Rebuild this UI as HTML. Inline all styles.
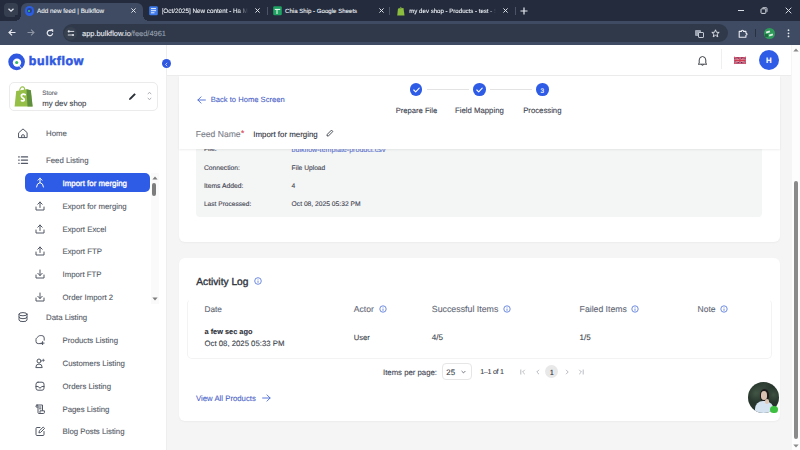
<!DOCTYPE html>
<html><head><meta charset="utf-8">
<style>
*{margin:0;padding:0;box-sizing:border-box;}
html,body{width:800px;height:450px;overflow:hidden;font-family:"Liberation Sans",sans-serif;background:#f5f5f5;position:relative;}
.a{position:absolute;white-space:nowrap;line-height:1;text-rendering:geometricPrecision;-webkit-text-stroke:0.1px currentColor;}
svg{display:block;overflow:visible;}
.tabt{color:#eceff4;top:8.6px;-webkit-text-stroke:0.1px #eceff4;}
.nav{font-size:7.8px;color:#545a66;}
.ico{stroke:#515764;fill:none;stroke-width:1;stroke-linecap:round;stroke-linejoin:round;}
.card{background:#fff;border-radius:6px;}
.lbl{font-size:6.6px;color:#3e4350;}
.th{font-size:8.6px;color:#6b7080;}
.td{font-size:7.6px;color:#3a3f4b;}
.info{stroke:#4b6fd8;fill:none;stroke-width:0.8;}
</style></head><body>
<!-- ===== browser chrome ===== -->
<div class="a" style="left:0;top:0;width:800px;height:21px;background:#232b3c;"></div>
<div class="a" style="left:0;top:21px;width:800px;height:24px;background:#3e4b62;"></div>
<div class="a" style="left:0;top:44px;width:800px;height:1px;background:#3e4b62;"></div>
<!-- dropdown btn -->
<div class="a" style="left:4px;top:3px;width:14px;height:14px;background:#363f50;border-radius:4px;"></div>
<svg class="a" style="left:7px;top:7px" width="8" height="6" viewBox="0 0 8 6"><path d="M1.5 1.8 L4 4.2 L6.5 1.8" stroke="#dfe3ea" stroke-width="1.3" fill="none"/></svg>
<!-- active tab -->
<div class="a" style="left:21px;top:3px;width:122px;height:19px;background:#3e4b62;border-radius:6px 6px 0 0;"></div>
<div class="a" style="left:15px;top:15px;width:6px;height:6px;background:radial-gradient(circle at 0 0,#232b3c 6px,#3e4b62 6px);"></div>
<div class="a" style="left:143px;top:15px;width:6px;height:6px;background:radial-gradient(circle at 6px 0,#232b3c 6px,#3e4b62 6px);"></div>
<!-- favicon bulkflow -->
<div class="a" style="left:24.6px;top:6px;width:9.5px;height:9.5px;border-radius:50%;background:#2b5fe3;"></div>
<div class="a" style="left:27px;top:8.4px;width:4.7px;height:4.7px;border-radius:50%;background:#2a3f8f;"></div>
<div class="a" style="left:28.2px;top:9.6px;width:2.2px;height:2.2px;border-radius:50%;background:#37c46b;"></div>
<div class="a tabt" style="left:37px;font-size:6.3px;">Add new feed | Bulkflow</div>
<svg class="a" style="left:129.5px;top:7px" width="7" height="7" viewBox="0 0 7 7"><path d="M1.4 1.4L5.6 5.6M5.6 1.4L1.4 5.6" stroke="#e6e9ef" stroke-width="0.95"/></svg>
<!-- tab 2 -->
<svg class="a" style="left:148.5px;top:5.8px" width="9" height="9.4" viewBox="0 0 9 9.4"><rect x="0.2" y="0.2" width="8.6" height="9" rx="1.3" fill="#3f7bec"/><path d="M2 2.6H7M2 4.7H7M2 6.8H5.5" stroke="#f2f6ff" stroke-width="0.95"/></svg>
<div class="a tabt" style="left:161.6px;font-size:6.3px;width:86px;height:12px;margin-top:-3px;padding-top:3px;overflow:hidden;-webkit-mask-image:linear-gradient(90deg,#000 88%,transparent);">[Oct/2025] New content - Ha M</div>
<svg class="a" style="left:253.5px;top:7px" width="7" height="7" viewBox="0 0 7 7"><path d="M1.4 1.4L5.6 5.6M5.6 1.4L1.4 5.6" stroke="#e6e9ef" stroke-width="0.95"/></svg>
<div class="a" style="left:267px;top:7px;width:1px;height:8px;background:#4b5467;"></div>
<!-- tab 3 -->
<svg class="a" style="left:272.8px;top:5.8px" width="9" height="9.4" viewBox="0 0 9 9.4"><rect x="0.2" y="0.2" width="8.6" height="9" rx="1.3" fill="#1ea362"/><path d="M1.8 3.4H7.2M4 3.4V8" stroke="#f2fff6" stroke-width="1"/></svg>
<div class="a tabt" style="left:285px;font-size:6.1px;">Chia Ship - Google Sheets</div>
<svg class="a" style="left:377.5px;top:7px" width="7" height="7" viewBox="0 0 7 7"><path d="M1.4 1.4L5.6 5.6M5.6 1.4L1.4 5.6" stroke="#e6e9ef" stroke-width="0.95"/></svg>
<div class="a" style="left:389px;top:7px;width:1px;height:8px;background:#4b5467;"></div>
<!-- tab 4 -->
<svg class="a" style="left:396.5px;top:5.5px" width="8" height="10" viewBox="0 0 8 10"><path d="M1 2.5 L6.5 2 L7.5 9.5 L0.2 9.5 Z" fill="#8cbd3f"/><path d="M2.5 2.6 Q3.5 0.2 4.8 2.2" stroke="#8cbd3f" stroke-width="0.8" fill="none"/></svg>
<div class="a tabt" style="left:409.3px;font-size:6.1px;width:87px;height:12px;margin-top:-3px;padding-top:3px;overflow:hidden;-webkit-mask-image:linear-gradient(90deg,#000 90%,transparent);">my dev shop - Products - test - S</div>
<svg class="a" style="left:501.5px;top:7px" width="7" height="7" viewBox="0 0 7 7"><path d="M1.4 1.4L5.6 5.6M5.6 1.4L1.4 5.6" stroke="#e6e9ef" stroke-width="0.95"/></svg>
<div class="a" style="left:514.5px;top:7px;width:1px;height:8px;background:#4b5467;"></div>
<svg class="a" style="left:519.5px;top:6.5px" width="8" height="8" viewBox="0 0 8 8"><path d="M4 0.5V7.5M0.5 4H7.5" stroke="#e6e9ef" stroke-width="1.2"/></svg>
<!-- window controls -->
<div class="a" style="left:737.5px;top:10px;width:6px;height:1px;background:#d8dce4;"></div>
<svg class="a" style="left:760px;top:7px" width="8" height="7" viewBox="0 0 8 7"><rect x="1" y="1.8" width="4.8" height="4.6" rx="0.8" stroke="#d8dce4" stroke-width="1" fill="none"/><path d="M2.5 0.7H6.2Q7 0.7 7 1.5V4.8" stroke="#d8dce4" stroke-width="0.9" fill="none"/></svg>
<svg class="a" style="left:784.5px;top:7px" width="7" height="7" viewBox="0 0 7 7"><path d="M0.7 0.7L6.3 6.3M6.3 0.7L0.7 6.3" stroke="#d8dce4" stroke-width="1"/></svg>
<!-- toolbar -->
<svg class="a" style="left:7.5px;top:29px" width="8" height="7" viewBox="0 0 8 7"><path d="M7.5 3.5H1.2M4 0.6L1 3.5L4 6.4" stroke="#e6e9ef" stroke-width="1.2" fill="none"/></svg>
<svg class="a" style="left:26.5px;top:29px" width="8" height="7" viewBox="0 0 8 7"><path d="M0.5 3.5H6.8M4 0.6L7 3.5L4 6.4" stroke="#8d95a5" stroke-width="1.1" fill="none"/></svg>
<svg class="a" style="left:45.5px;top:29px" width="8" height="8" viewBox="0 0 8 8"><path d="M6.6 4.2A2.7 2.7 0 1 1 5.6 1.9" stroke="#e6e9ef" stroke-width="1.2" fill="none"/><path d="M4.6 0.6H6.9V2.9Z" fill="#e6e9ef" stroke="#e6e9ef" stroke-width="0.6"/></svg>
<div class="a" style="left:63px;top:24px;width:665px;height:17.5px;background:#2f394a;border-radius:9px;"></div>
<div class="a" style="left:64.3px;top:27.2px;width:13px;height:13px;background:#37414f;border-radius:50%;"></div>
<svg class="a" style="left:67px;top:29.6px" width="8" height="8" viewBox="0 0 8 8"><path d="M2.6 1.4H7.2M0.8 5H5" stroke="#e6e9ef" stroke-width="0.9"/><circle cx="1.8" cy="1.4" r="1.1" fill="#e6e9ef"/><circle cx="6" cy="5" r="1.1" fill="#e6e9ef"/></svg>
<div class="a" style="left:82px;top:29.6px;font-size:7.45px;color:#e9ecf1;">app.bulkflow.io<span style="color:#9aa3b2">/feed/4961</span></div>
<!-- translate icon -->
<div class="a" style="left:694.5px;top:29.5px;width:6px;height:6px;background:#9ba3b1;border-radius:1px;"></div>
<div class="a" style="left:697.5px;top:31.5px;width:6px;height:6px;background:#2f394a;border:1px solid #c4cad4;border-radius:1px;"></div>
<svg class="a" style="left:711px;top:28.5px" width="9" height="9" viewBox="0 0 9 9"><path d="M4.5 0.8L5.5 3.3L8.2 3.4L6.1 5.1L6.8 7.8L4.5 6.3L2.2 7.8L2.9 5.1L0.8 3.4L3.5 3.3Z" stroke="#e6e9ef" stroke-width="0.9" fill="none" stroke-linejoin="round"/></svg>
<svg class="a" style="left:737.5px;top:28.5px" width="10" height="9" viewBox="0 0 10 9"><path d="M1.2 2.4H3.4A1.1 1.1 0 0 1 5.6 2.4H7.9V4.1A1.1 1.1 0 0 1 7.9 6.3V8.3H1.2Z" stroke="#e9ecf1" stroke-width="1.1" fill="none" stroke-linejoin="round"/></svg>
<div class="a" style="left:755.3px;top:29px;width:1px;height:8px;background:#283140;"></div>
<div class="a" style="left:764.3px;top:28.2px;width:10.5px;height:10.5px;border-radius:50%;overflow:hidden;background:#2e9a5a;"><div class="a" style="left:2px;top:3px;width:4px;height:2px;background:#e8f0ea;transform:rotate(-20deg)"></div><div class="a" style="left:5px;top:5.5px;width:4px;height:2px;background:#dfeee4;transform:rotate(-20deg)"></div><div class="a" style="left:1px;top:6px;width:3px;height:3px;background:#1d6e3e;"></div></div>
<svg class="a" style="left:786.5px;top:29px" width="3" height="9" viewBox="0 0 3 9"><circle cx="1.5" cy="1.2" r="0.9" fill="#e6e9ef"/><circle cx="1.5" cy="4.3" r="0.9" fill="#e6e9ef"/><circle cx="1.5" cy="7.4" r="0.9" fill="#e6e9ef"/></svg>
<div class="a" style="left:0;top:45px;width:800px;height:405px;background:#f5f5f5;"></div>
<div class="a" style="left:0;top:45px;width:166px;height:405px;background:#fff;"></div>
<div class="a" style="left:166px;top:45px;width:1px;height:405px;background:#eeeeee;"></div>
<div class="a" style="left:167px;top:45px;width:624px;height:30px;background:#fff;"></div>
<div class="a" style="left:167px;top:74.5px;width:624px;height:1px;background:#ececec;"></div>
<div class="a" style="left:791.5px;top:45px;width:8.5px;height:405px;background:#fdfdfd;"></div>
<svg class="a" style="left:792.5px;top:48px" width="6" height="4" viewBox="0 0 6 4"><path d="M0.3 3.6L3 0.4L5.7 3.6Z" fill="#8a8a8a"/></svg>
<svg class="a" style="left:792.5px;top:443.6px" width="6" height="4" viewBox="0 0 6 4"><path d="M0.3 0.4L3 3.6L5.7 0.4Z" fill="#8a8a8a"/></svg>
<div class="a" style="left:793.7px;top:180.8px;width:4.5px;height:258px;background:#8a8a8a;border-radius:2.5px;"></div>
<svg class="a" style="left:8px;top:53px" width="18" height="18" viewBox="0 0 18 18">
<circle cx="8.6" cy="8.85" r="8.3" fill="#2f57e0"/>
<circle cx="9" cy="9.6" r="4.2" fill="#fff"/>
<path d="M11.2 12.6 L13.6 15.6" stroke="#fff" stroke-width="0.9"/>
<circle cx="8.7" cy="9.5" r="1.6" fill="#34b86a"/>
</svg>
<div class="a" style="left:28.8px;top:55px;font-size:12.4px;color:#2f57e0;font-weight:bold;letter-spacing:0.62px;-webkit-text-stroke:0.55px #2f57e0;">bulkflow</div>
<div class="a" style="left:8.5px;top:82px;width:149px;height:29px;border:1px solid #ebebeb;border-radius:5px;background:#fff;"></div>
<svg class="a" style="left:13.5px;top:85.5px" width="19" height="21" viewBox="0 0 19 21">
<path d="M2.2 5 L12.5 3.2 L16.8 4.2 L18.6 20.6 L0.6 20.6 Z" fill="#95bf47"/>
<path d="M12.5 3.2 L16.8 4.2 L18.6 20.6 L13.5 20.6 Z" fill="#5e8e3e"/>
<path d="M5.6 4.6 Q6.2 0.8 8.6 0.7 Q10.6 0.8 10.8 4" stroke="#95bf47" stroke-width="1.1" fill="none"/>
<path d="M11.2 8.7 Q10.2 8 9 8.2 Q7.2 8.6 7.4 10.2 Q7.6 11.4 9.3 12.2 Q10.6 13 10.2 14.2 Q9.6 15.5 7.5 14.6" stroke="#fff" stroke-width="1.7" fill="none" stroke-linecap="round"/>
</svg>
<div class="a" style="left:42.2px;top:91px;font-size:6.4px;color:#5b606b;">Store</div>
<div class="a" style="left:42.2px;top:100px;font-size:7.8px;color:#3a3f4b;">my dev shop</div>
<svg class="a" style="left:127.5px;top:92px" width="9" height="9" viewBox="0 0 9 9"><path d="M1 8 L1.4 6.2 L6.4 1.2 L7.8 2.6 L2.8 7.6 Z" fill="#2b2f38"/></svg>
<svg class="a" style="left:146.5px;top:91px" width="5" height="10" viewBox="0 0 5 10"><path d="M0.8 3.2L2.5 1.2L4.2 3.2M0.8 6.8L2.5 8.8L4.2 6.8" stroke="#9a9ea6" stroke-width="0.8" fill="none"/></svg>
<div class="a" style="left:46px;top:130px;font-size:7.8px;color:#545a66;">Home</div>
<svg class="a ico" style="left:18px;top:127.5px" width="10" height="10" viewBox="0 0 10 10"><path d="M0.9 4.6 L5 0.9 L9.1 4.6 V9.6 H0.9 Z"/><path d="M3.7 9.6 V7.2 Q5 6.1 6.3 7.2 V9.6"/></svg>
<div class="a" style="left:46px;top:157px;font-size:7.8px;color:#545a66;">Feed Listing</div>
<svg class="a ico" style="left:18px;top:154.8px" width="10" height="10" viewBox="0 0 10 10"><path d="M3.3 1.9H9.6M3.3 5.1H9.6M3.3 8.3H9.6" stroke-width="1.15"/><path d="M0.6 1.9H1.3M0.6 5.1H1.3M0.6 8.3H1.3" stroke-width="1.1"/></svg>
<div class="a" style="left:62.5px;top:203px;font-size:7.8px;color:#545a66;">Export for merging</div>
<svg class="a ico" style="left:34.5px;top:200.5px" width="10" height="10" viewBox="0 0 10 10"><path d="M5 6.5V1M2.8 3.2L5 1L7.2 3.2M1 6V9H9V6"/></svg>
<div class="a" style="left:62.5px;top:226px;font-size:7.8px;color:#545a66;">Export Excel</div>
<svg class="a ico" style="left:34.5px;top:223.5px" width="10" height="10" viewBox="0 0 10 10"><path d="M5 6.5V1M2.8 3.2L5 1L7.2 3.2M1 6V9H9V6"/></svg>
<div class="a" style="left:62.5px;top:248px;font-size:7.8px;color:#545a66;">Export FTP</div>
<svg class="a ico" style="left:34.5px;top:246.1px" width="10" height="10" viewBox="0 0 10 10"><path d="M5 6.5V1M2.8 3.2L5 1L7.2 3.2M1 6V9H9V6"/></svg>
<div class="a" style="left:62.5px;top:271px;font-size:7.8px;color:#545a66;">Import FTP</div>
<svg class="a ico" style="left:34.5px;top:269.1px" width="10" height="10" viewBox="0 0 10 10"><path d="M5 1V6.5M2.8 4.3L5 6.5L7.2 4.3M1 6V9H9V6"/></svg>
<div class="a" style="left:62.5px;top:294px;font-size:7.8px;color:#545a66;">Order Import 2</div>
<svg class="a ico" style="left:34.5px;top:291.9px" width="10" height="10" viewBox="0 0 10 10"><path d="M5 1V6.5M2.8 4.3L5 6.5L7.2 4.3M1 6V9H9V6"/></svg>
<div class="a" style="left:46px;top:314px;font-size:7.8px;color:#545a66;">Data Listing</div>
<svg class="a ico" style="left:18px;top:311.6px" width="10" height="10" viewBox="0 0 10 10"><ellipse cx="5" cy="2.2" rx="4" ry="1.6"/><path d="M1 2.2V8Q1 9.6 5 9.6Q9 9.6 9 8V2.2M1 5.1Q1 6.7 5 6.7Q9 6.7 9 5.1"/></svg>
<div class="a" style="left:62.5px;top:337px;font-size:7.8px;color:#545a66;">Products Listing</div>
<svg class="a ico" style="left:34.5px;top:334.7px" width="10" height="10" viewBox="0 0 10 10"><path d="M6.8 8.6 L3.2 8.6 Q1 8.6 1 6.4 L1 4.4 Q1 3.6 1.6 3 L3.8 1 Q4.4 0.6 5.2 0.6 L6.8 0.6 Q9.2 0.6 9.2 3 L9.2 5.2"/><path d="M7.6 6.6V9.6M6.1 8.1H9.1"/></svg>
<div class="a" style="left:62.5px;top:360px;font-size:7.8px;color:#545a66;">Customers Listing</div>
<svg class="a ico" style="left:34.5px;top:357.7px" width="10" height="10" viewBox="0 0 10 10"><circle cx="4" cy="3" r="2"/><path d="M0.8 9.2Q0.8 6 4 6Q7.2 6 7.2 9.2Z"/><path d="M8.3 1.2V3.4M7.2 2.3H9.4" stroke-width="0.8"/></svg>
<div class="a" style="left:62.5px;top:383px;font-size:7.8px;color:#545a66;">Orders Listing</div>
<svg class="a ico" style="left:34.5px;top:380.5px" width="10" height="10" viewBox="0 0 10 10"><rect x="1" y="1.2" width="8" height="8" rx="2"/><path d="M1 5.5H3.3Q3.8 7 5 7Q6.2 7 6.7 5.5H9"/></svg>
<div class="a" style="left:62.5px;top:406px;font-size:7.8px;color:#545a66;">Pages Listing</div>
<svg class="a ico" style="left:34.5px;top:403.7px" width="10" height="10" viewBox="0 0 10 10"><path d="M2 1H7.5V6.5M2 1Q1 1 1 2.2V3H3M2 1Q3 1 3 2.2V8.6Q3 9.5 4 9.5H8.4Q9.4 9.5 9.4 8.5V6.8H5V8.5"/><path d="M4.5 3H6M4.5 4.8H6"/></svg>
<div class="a" style="left:62.5px;top:428px;font-size:7.8px;color:#545a66;">Blog Posts Listing</div>
<svg class="a ico" style="left:34.5px;top:426.1px" width="10" height="10" viewBox="0 0 10 10"><path d="M5 1.5H2Q1 1.5 1 2.5V8.5Q1 9.5 2 9.5H8Q9 9.5 9 8.5V5.5"/><path d="M4 6.5L4.4 4.8L8.2 1L9.6 2.4L5.8 6.2Z"/></svg>
<div class="a" style="left:25px;top:173.3px;width:125px;height:18.5px;background:#2f5ce6;border-radius:5px;"></div>
<div class="a" style="left:62.5px;top:180px;font-size:7.9px;color:#ffffff;-webkit-text-stroke:0.32px #fff;">Import for merging</div>
<svg class="a" style="left:34.5px;top:177px" width="10" height="11" viewBox="0 0 10 11"><path d="M5 1.2V5.6M3 3.2L5 1.2L7 3.2M1.5 10Q1.8 6.2 5 5.6Q8.2 6.2 8.5 10" stroke="#fff" stroke-width="1" fill="none" stroke-linecap="round" stroke-linejoin="round"/></svg>
<div class="a" style="left:150.5px;top:173px;width:8px;height:131px;background:#fafafa;"></div>
<svg class="a" style="left:151.5px;top:176px" width="6" height="4" viewBox="0 0 6 4"><path d="M0.4 3.6L3 0.5L5.6 3.6Z" fill="#7d7d7d"/></svg>
<div class="a" style="left:152.4px;top:182.5px;width:4px;height:13px;background:#7d7d7d;border-radius:2px;"></div>
<svg class="a" style="left:151.5px;top:297px" width="6" height="4" viewBox="0 0 6 4"><path d="M0.4 0.4L3 3.5L5.6 0.4Z" fill="#7d7d7d"/></svg>
<div class="a" style="left:161.8px;top:59.2px;width:9px;height:9px;border-radius:50%;background:#2f57e0;"></div>
<svg class="a" style="left:164px;top:61.5px" width="5" height="5" viewBox="0 0 5 5"><path d="M3.2 0.8L1.6 2.5L3.2 4.2" stroke="#fff" stroke-width="0.7" fill="none"/></svg>
<svg class="a" style="left:696.5px;top:55px" width="11" height="11" viewBox="0 0 11 11"><path d="M2.2 8.3V5Q2.2 1.8 5.5 1.5Q8.8 1.8 8.8 5V8.3L9.8 9.2H1.2Z" stroke="#2d3038" stroke-width="0.9" fill="none" stroke-linejoin="round"/><path d="M4.3 9.6Q5.5 11 6.7 9.6" stroke="#2d3038" stroke-width="0.9" fill="none"/></svg>
<div class="a" style="left:721px;top:49px;width:1px;height:20px;background:#efefef;"></div>
<svg class="a" style="left:733.9px;top:56.6px" width="11.9" height="6.7" viewBox="0 0 60 34" preserveAspectRatio="none">
<rect width="60" height="34" fill="#2b2f6a"/>
<path d="M0 0L60 34M60 0L0 34" stroke="#e8a0aa" stroke-width="7"/>
<path d="M0 0L60 34M60 0L0 34" stroke="#cf3a50" stroke-width="4"/>
<path d="M30 0V34M0 17H60" stroke="#eeb0b8" stroke-width="11"/>
<path d="M30 0V34M0 17H60" stroke="#cf3a50" stroke-width="7"/>
<rect x="1.5" y="1.5" width="57" height="31" fill="none" stroke="#e0506a" stroke-width="3"/>
</svg>
<div class="a" style="left:758.7px;top:49.6px;width:20.5px;height:20.5px;border-radius:50%;background:#2f5ce6;"></div>
<div class="a" style="left:766px;top:57px;font-size:7.8px;color:#fff;font-weight:bold;">H</div>
<div class="a card" style="left:179.2px;top:100px;width:600.8px;height:141.9px;box-shadow:0 1px 2px rgba(0,0,0,0.04);"></div>
<div class="a" style="left:196px;top:100px;width:566px;height:117px;background:#f4f5f5;border-radius:4px;"></div>
<div class="a" style="left:203.9px;top:147px;font-size:6.7px;color:#3e4350;">File:</div>
<div class="a" style="left:291.6px;top:147px;font-size:7.1px;color:#5a72cf;">bulkflow-template-product.csv</div>
<div class="a" style="left:203.9px;top:166px;font-size:6.75px;color:#3e4350;">Connection:</div>
<div class="a" style="left:291.6px;top:166px;font-size:6.66px;color:#3e4350;">File Upload</div>
<div class="a" style="left:203.9px;top:184px;font-size:6.75px;color:#3e4350;">Items Added:</div>
<div class="a" style="left:291.6px;top:184px;font-size:6.7px;color:#3e4350;">4</div>
<div class="a" style="left:203.9px;top:202px;font-size:6.61px;color:#3e4350;">Last Processed:</div>
<div class="a" style="left:291.6px;top:202px;font-size:6.71px;color:#3e4350;">Oct 08, 2025 05:32 PM</div>
<div class="a" style="left:179.2px;top:75.5px;width:600.8px;height:73.7px;background:#fff;box-shadow:0 1px 2px rgba(0,0,0,0.07);"></div>
<svg class="a" style="left:196.5px;top:95.5px" width="9" height="8" viewBox="0 0 9 8"><path d="M8.4 4H0.9M4 0.9L0.9 4L4 7.1" stroke="#4a6ad6" stroke-width="0.9" fill="none" stroke-linecap="round" stroke-linejoin="round"/></svg>
<div class="a" style="left:210.7px;top:96px;font-size:7.61px;color:#4a63c8;">Back to Home Screen</div>
<div class="a" style="left:409.9px;top:83.3px;width:12.6px;height:12.6px;border-radius:50%;background:#2f5ce6;"></div>
<svg class="a" style="left:412.7px;top:86.6px" width="7" height="6" viewBox="0 0 7 6"><path d="M0.8 3L2.7 4.8L6.2 1.2" stroke="#fff" stroke-width="1.1" fill="none" stroke-linecap="round" stroke-linejoin="round"/></svg>
<div class="a" style="left:473.4px;top:83.3px;width:12.6px;height:12.6px;border-radius:50%;background:#2f5ce6;"></div>
<svg class="a" style="left:476.2px;top:86.6px" width="7" height="6" viewBox="0 0 7 6"><path d="M0.8 3L2.7 4.8L6.2 1.2" stroke="#fff" stroke-width="1.1" fill="none" stroke-linecap="round" stroke-linejoin="round"/></svg>
<div class="a" style="left:536.2px;top:83.3px;width:12.6px;height:12.6px;border-radius:50%;background:#2f5ce6;"></div>
<div class="a" style="left:540.6px;top:89px;font-size:6.4px;color:#fff;">3</div>
<div class="a" style="left:427.3px;top:89.2px;width:41.3px;height:1px;background:#e3e3e3;"></div>
<div class="a" style="left:490.2px;top:89.2px;width:41.6px;height:1px;background:#e3e3e3;"></div>
<div class="a" style="left:395.7px;top:107px;font-size:7.64px;color:#3e4350;">Prepare File</div>
<div class="a" style="left:455px;top:107px;font-size:7.77px;color:#3e4350;">Field Mapping</div>
<div class="a" style="left:523.2px;top:107px;font-size:7.74px;color:#3e4350;">Processing</div>
<div class="a" style="left:195.8px;top:130px;font-size:8.57px;color:#7a7e88;">Feed Name</div>
<div class="a" style="left:241px;top:129px;font-size:8.5px;color:#d9364a;">*</div>
<div class="a" style="left:253.3px;top:131px;font-size:7.9px;color:#2e323c;">Import for merging</div>
<svg class="a" style="left:326px;top:128.5px" width="8" height="8" viewBox="0 0 8 8"><path d="M1 7L1.3 5.3L5.5 1.1L6.9 2.5L2.7 6.7Z" stroke="#3a3f4b" stroke-width="0.9" fill="none" stroke-linejoin="round"/></svg>
<div class="a card" style="left:179.2px;top:258px;width:600.8px;height:162.5px;box-shadow:0 1px 2px rgba(0,0,0,0.04);"></div>
<div class="a" style="left:196.3px;top:278px;font-size:10.2px;color:#2f333d;-webkit-text-stroke:0.35px #2f333d;">Activity Log</div>
<svg class="a" style="left:253.89999999999998px;top:276.5px" width="8" height="8" viewBox="0 0 8 8"><circle cx="4" cy="4" r="3.3" class="info"/><path d="M4 3.6V5.8" stroke="#4b6fd8" stroke-width="0.8"/><circle cx="4" cy="2.4" r="0.45" fill="#4b6fd8"/></svg>
<div class="a" style="left:187.3px;top:298.5px;width:584.3px;height:60.5px;border:1px solid #f3f3f3;border-top-color:transparent;border-radius:5px;"></div>
<div class="a" style="left:204.5px;top:306px;font-size:8.28px;color:#636876;">Date</div>
<div class="a" style="left:353.8px;top:305px;font-size:8.6px;color:#636876;">Actor</div>
<svg class="a" style="left:379.3px;top:305.3px" width="8" height="8" viewBox="0 0 8 8"><circle cx="4" cy="4" r="3.2" class="info"/><path d="M4 3.6V5.8" stroke="#4b6fd8" stroke-width="0.8"/><circle cx="4" cy="2.4" r="0.45" fill="#4b6fd8"/></svg>
<div class="a" style="left:431.8px;top:305px;font-size:8.8px;color:#636876;">Successful Items</div>
<svg class="a" style="left:503px;top:305.3px" width="8" height="8" viewBox="0 0 8 8"><circle cx="4" cy="4" r="3.2" class="info"/><path d="M4 3.6V5.8" stroke="#4b6fd8" stroke-width="0.8"/><circle cx="4" cy="2.4" r="0.45" fill="#4b6fd8"/></svg>
<div class="a" style="left:579.6px;top:305px;font-size:8.68px;color:#636876;">Failed Items</div>
<svg class="a" style="left:631.3px;top:305.3px" width="8" height="8" viewBox="0 0 8 8"><circle cx="4" cy="4" r="3.2" class="info"/><path d="M4 3.6V5.8" stroke="#4b6fd8" stroke-width="0.8"/><circle cx="4" cy="2.4" r="0.45" fill="#4b6fd8"/></svg>
<div class="a" style="left:697.5px;top:305px;font-size:8.52px;color:#636876;">Note</div>
<svg class="a" style="left:720.3px;top:305.3px" width="8" height="8" viewBox="0 0 8 8"><circle cx="4" cy="4" r="3.2" class="info"/><path d="M4 3.6V5.8" stroke="#4b6fd8" stroke-width="0.8"/><circle cx="4" cy="2.4" r="0.45" fill="#4b6fd8"/></svg>
<div class="a" style="left:204.5px;top:328px;font-size:7.38px;color:#2b2f38;font-weight:bold;">a few sec ago</div>
<div class="a" style="left:204.5px;top:340px;font-size:7.78px;color:#3a3f4b;">Oct 08, 2025 05:33 PM</div>
<div class="a" style="left:353.8px;top:334px;font-size:7.58px;color:#3a3f4b;">User</div>
<div class="a" style="left:431.8px;top:334px;font-size:8.1px;color:#3a3f4b;">4/5</div>
<div class="a" style="left:579.6px;top:334px;font-size:8.0px;color:#3a3f4b;">1/5</div>
<div class="a" style="left:383px;top:369px;font-size:7.77px;color:#3e4350;">Items per page:</div>
<div class="a" style="left:441.5px;top:363.3px;width:30.5px;height:16.5px;border:1px solid #e6e6e6;border-radius:4px;"></div>
<div class="a" style="left:446.3px;top:369px;font-size:7.9px;color:#3a3f4b;">25</div>
<svg class="a" style="left:460.5px;top:369.5px" width="5" height="4" viewBox="0 0 5 4"><path d="M0.6 1L2.5 2.9L4.4 1" stroke="#3a3f4b" stroke-width="0.7" fill="none"/></svg>
<div class="a" style="left:480.2px;top:369px;font-size:7.1px;color:#3a3f4b;letter-spacing:-0.27px;">1–1 of 1</div>
<svg class="a" style="left:519.5px;top:368.5px" width="6" height="6" viewBox="0 0 6 6"><path d="M0.8 0.5V5.5M4.8 0.8L2.6 3L4.8 5.2" stroke="#9a9ea6" stroke-width="0.7" fill="none"/></svg>
<svg class="a" style="left:535.5px;top:368.5px" width="4" height="6" viewBox="0 0 4 6"><path d="M3 0.8L0.8 3L3 5.2" stroke="#9a9ea6" stroke-width="0.7" fill="none"/></svg>
<div class="a" style="left:545.3px;top:364.8px;width:13px;height:13px;border-radius:50%;background:#e8e8e8;"></div>
<div class="a" style="left:549.7px;top:369px;font-size:7.4px;color:#2b2f38;">1</div>
<svg class="a" style="left:564.5px;top:368.5px" width="4" height="6" viewBox="0 0 4 6"><path d="M1 0.8L3.2 3L1 5.2" stroke="#9a9ea6" stroke-width="0.7" fill="none"/></svg>
<svg class="a" style="left:578px;top:368.5px" width="6" height="6" viewBox="0 0 6 6"><path d="M5.2 0.5V5.5M1.2 0.8L3.4 3L1.2 5.2" stroke="#9a9ea6" stroke-width="0.7" fill="none"/></svg>
<div class="a" style="left:196px;top:395px;font-size:7.78px;color:#4a63c8;">View All Products</div>
<svg class="a" style="left:261.5px;top:394.3px" width="9" height="8" viewBox="0 0 9 8"><path d="M0.6 4H8.1M5 0.9L8.1 4L5 7.1" stroke="#4a6ad6" stroke-width="0.9" fill="none" stroke-linecap="round" stroke-linejoin="round"/></svg>
<div class="a" style="left:748px;top:382px;width:31.2px;height:31.2px;border-radius:50%;overflow:hidden;background:#26342b;">
<div class="a" style="left:0;top:0;width:32px;height:32px;background:radial-gradient(circle at 25% 35%,rgba(120,150,120,0.35) 0,transparent 30%),radial-gradient(circle at 80% 40%,rgba(120,150,120,0.3) 0,transparent 25%),radial-gradient(circle at 50% 15%,rgba(90,110,90,0.3) 0,transparent 30%);"></div>
<div class="a" style="left:11.5px;top:6.5px;width:9px;height:12px;border-radius:50% 50% 40% 40%;background:#1e1c1c;"></div>
<div class="a" style="left:12.8px;top:9px;width:6.5px;height:8.5px;border-radius:45%;background:#d9c2b2;"></div>
<div class="a" style="left:7px;top:18.5px;width:19px;height:16px;border-radius:8px 9px 0 0;background:#d5e3f1;"></div>
<div class="a" style="left:16.5px;top:16.5px;width:4px;height:5px;border-radius:2px;background:#e0c8b8;"></div>
</div>
<div class="a" style="left:770.3px;top:405.5px;width:7.6px;height:7.6px;border-radius:50%;background:#3dbf3f;"></div></body></html>
